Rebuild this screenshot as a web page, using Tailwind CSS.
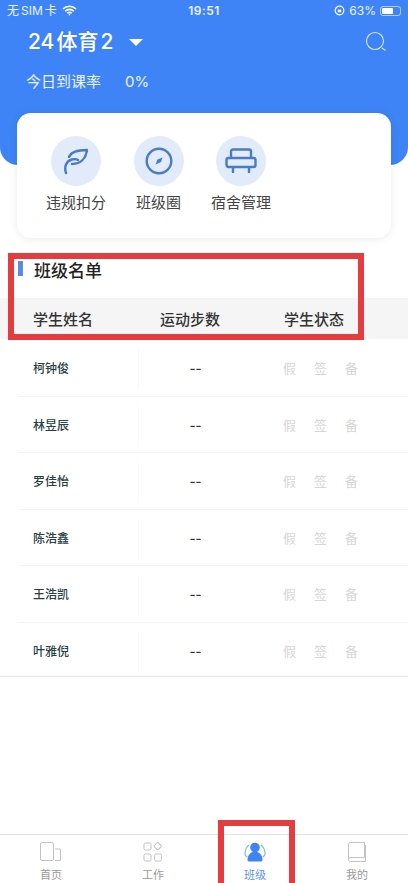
<!DOCTYPE html>
<html lang="zh-CN">
<head>
  <meta charset="UTF-8" />
  <title>班级</title>
  <script src="https://cdn.jsdelivr.net/npm/@tailwindcss/browser@4"></script>
</head>
<body class="bg-white font-['Inter','Noto_Sans_CJK_SC',sans-serif]">
  <div class="relative w-[408px] h-[883px] overflow-hidden flex flex-col bg-white">

    <!-- blue header -->
    <header class="h-[165px] shrink-0 bg-[#3e84f6] rounded-b-[18px] text-white px-[7px]">
      <div class="h-[21px] grid grid-cols-3 items-center text-[12px] text-white/90">
        <div class="flex items-center gap-[5px] whitespace-nowrap">
          <span>无<span class="mx-[2px]">SIM</span>卡</span>
          <svg width="15" height="11" viewBox="0 0 15 11" fill="none" stroke="white" stroke-width="1.6">
            <path d="M1 4a9 9 0 0 1 13 0M3.200 6.200a6 6 0 0 1 8.600 0M5.300 8.300a3 3 0 0 1 4.400 0" />
            <circle cx="7.500" cy="9.800" r=".8" fill="white" stroke="none" />
          </svg>
        </div>
        <span class="font-semibold text-center tracking-[0.5px]">19:51</span>
        <div class="flex items-center justify-end gap-[4px]">
          <svg width="11" height="11" viewBox="0 0 11 11" fill="none" stroke="white" stroke-width="1.2">
            <circle cx="5.500" cy="5.500" r="4.300" />
            <rect x="3.800" y="4.600" width="3.400" height="2.600" fill="white" stroke="none" />
          </svg>
          <span>63%</span>
          <div class="w-[21px] h-[10px] rounded-[3px] border border-white/60 p-[1px] flex">
            <div class="w-[62%] bg-white rounded-[1px]"></div>
          </div>
        </div>
      </div>

      <div class="mt-[7px] pl-[21px] pr-[14px] flex items-center justify-between">
        <div class="flex items-center">
          <span class="text-[21px] leading-[28px] font-medium">24<span class="mx-[2px]">体育</span>2</span>
          <span class="ml-[16px] mt-[1px] w-0 h-0 border-x-[7px] border-x-transparent border-t-[7px] border-t-white"></span>
        </div>
        <svg width="22" height="22" viewBox="0 0 22 22" fill="none" stroke="white" stroke-width="1.1" class="opacity-80">
          <circle cx="10" cy="10" r="8.500" />
          <path d="M17 17l3.500 2.500" />
        </svg>
      </div>

      <div class="mt-[16px] pl-[19px] flex items-center text-[15px] leading-[20px] text-white/90">
        <span>今日到课率</span>
        <span class="ml-[24px]">0%</span>
      </div>
    </header>

    <!-- shortcuts card -->
    <section class="relative -mt-[52px] mx-[17px] h-[125px] shrink-0 rounded-[14px] bg-white shadow-[0_1px_8px_rgba(0,0,0,0.08)] flex pt-[23px] pl-[34px] gap-[32.500px]">
      <div class="w-[50px] flex flex-col items-center">
        <div class="w-[50px] h-[50px] rounded-full bg-[#e1ebf9] flex items-center justify-center">
          <svg width="24" height="28" viewBox="0 0 24 28" fill="none" stroke="#4a7cc4" stroke-width="2.400" stroke-linecap="round" stroke-linejoin="round">
            <path d="M5 10C7 5 14 3 23 3C22 11 17 17 8 17" />
            <path d="M2 26C0 20 2 14 8 12.500C10 12 12.500 12 14 13" />
          </svg>
        </div>
        <span class="mt-[7px] text-[15px] leading-[20px] text-[#444] whitespace-nowrap">违规扣分</span>
      </div>
      <div class="w-[50px] flex flex-col items-center">
        <div class="w-[50px] h-[50px] rounded-full bg-[#e1ebf9] flex items-center justify-center">
          <svg width="28" height="28" viewBox="0 0 28 28" fill="none">
            <circle cx="14" cy="14" r="12.300" stroke="#4a7cc4" stroke-width="2.400" />
            <path d="M17.500 10.500l-1.500 4.500-5.500 2.500 2-5z" fill="#4a7cc4" />
          </svg>
        </div>
        <span class="mt-[7px] text-[15px] leading-[20px] text-[#444] whitespace-nowrap">班级圈</span>
      </div>
      <div class="w-[50px] flex flex-col items-center">
        <div class="w-[50px] h-[50px] rounded-full bg-[#e1ebf9] flex items-center justify-center">
          <svg width="32" height="26" viewBox="0 0 32 26" fill="none" stroke="#4a7cc4" stroke-width="2.400" stroke-linejoin="round">
            <path d="M6 10V3.500a2 2 0 0 1 2-2h16a2 2 0 0 1 2 2V10" />
            <rect x="1.500" y="10" width="29" height="9" rx="2" />
            <path d="M8 19v6M24 19v6" />
          </svg>
        </div>
        <span class="mt-[7px] text-[15px] leading-[20px] text-[#444] whitespace-nowrap">宿舍管理</span>
      </div>
    </section>

    <!-- roster -->
    <section class="mt-[22px] flex-1">
      <div class="h-[38px] flex pl-[18px]">
        <span class="w-[5px] h-[15px] mt-[1px] bg-[#5b8bdc]"></span>
        <h2 class="ml-[11px] text-[17px] leading-[20px] pt-[1px] font-medium text-[#222]">班级名单</h2>
      </div>
      <div class="h-[41px] bg-[#f5f5f5] flex items-end pb-[9px] text-[15px] leading-[20px] text-[#333] font-medium">
        <span class="w-[160px] pl-[33px]">学生姓名</span>
        <span class="w-[124px]">运动步数</span>
        <span>学生状态</span>
      </div>
      <div class="pt-[1px]">
        <div class="h-[56.500px] ml-[18px] border-b border-[#f4f4f4] flex items-start">
          <span class="mt-[9px] w-[121px] h-[40px] pl-[15px] border-r border-[#f8f8f8] flex items-center text-[12px] font-medium text-[#274046]">柯钟俊</span>
          <span class="mt-[8px] leading-[40px] w-[113px] text-center text-[13px] font-medium text-[#333]">--</span>
          <div class="mt-[8px] leading-[40px] ml-[31px] flex gap-[18px] text-[13px] text-[#d6d6d6]"><span>假</span><span>签</span><span>备</span></div>
        </div>
        <div class="h-[56.500px] ml-[18px] border-b border-[#f4f4f4] flex items-start">
          <span class="mt-[9px] w-[121px] h-[40px] pl-[15px] border-r border-[#f8f8f8] flex items-center text-[12px] font-medium text-[#274046]">林昱辰</span>
          <span class="mt-[8px] leading-[40px] w-[113px] text-center text-[13px] font-medium text-[#333]">--</span>
          <div class="mt-[8px] leading-[40px] ml-[31px] flex gap-[18px] text-[13px] text-[#d6d6d6]"><span>假</span><span>签</span><span>备</span></div>
        </div>
        <div class="h-[56.500px] ml-[18px] border-b border-[#f4f4f4] flex items-start">
          <span class="mt-[9px] w-[121px] h-[40px] pl-[15px] border-r border-[#f8f8f8] flex items-center text-[12px] font-medium text-[#274046]">罗佳怡</span>
          <span class="mt-[8px] leading-[40px] w-[113px] text-center text-[13px] font-medium text-[#333]">--</span>
          <div class="mt-[8px] leading-[40px] ml-[31px] flex gap-[18px] text-[13px] text-[#d6d6d6]"><span>假</span><span>签</span><span>备</span></div>
        </div>
        <div class="h-[56.500px] ml-[18px] border-b border-[#f4f4f4] flex items-start">
          <span class="mt-[9px] w-[121px] h-[40px] pl-[15px] border-r border-[#f8f8f8] flex items-center text-[12px] font-medium text-[#274046]">陈浩鑫</span>
          <span class="mt-[8px] leading-[40px] w-[113px] text-center text-[13px] font-medium text-[#333]">--</span>
          <div class="mt-[8px] leading-[40px] ml-[31px] flex gap-[18px] text-[13px] text-[#d6d6d6]"><span>假</span><span>签</span><span>备</span></div>
        </div>
        <div class="h-[56.500px] ml-[18px] border-b border-[#f4f4f4] flex items-start">
          <span class="mt-[9px] w-[121px] h-[40px] pl-[15px] border-r border-[#f8f8f8] flex items-center text-[12px] font-medium text-[#274046]">王浩凯</span>
          <span class="mt-[8px] leading-[40px] w-[113px] text-center text-[13px] font-medium text-[#333]">--</span>
          <div class="mt-[8px] leading-[40px] ml-[31px] flex gap-[18px] text-[13px] text-[#d6d6d6]"><span>假</span><span>签</span><span>备</span></div>
        </div>
        <div class="h-[54.500px] border-b border-[#e6e6e6] flex items-start pl-[18px]">
          <span class="mt-[9px] w-[121px] h-[40px] pl-[15px] border-r border-[#f8f8f8] flex items-center text-[12px] font-medium text-[#274046]">叶雅倪</span>
          <span class="mt-[8px] leading-[40px] w-[113px] text-center text-[13px] font-medium text-[#333]">--</span>
          <div class="mt-[8px] leading-[40px] ml-[31px] flex gap-[18px] text-[13px] text-[#d6d6d6]"><span>假</span><span>签</span><span>备</span></div>
        </div>
      </div>
    </section>

    <!-- tab bar -->
    <nav class="h-[49px] shrink-0 border-t border-[#e2e2e2] grid grid-cols-4 text-[11px] leading-[14px] text-[#999]">
      <div class="flex flex-col items-center pt-[7px]">
        <svg width="22" height="20" viewBox="0 0 22 20" fill="none" stroke="#c2c2c2" stroke-width="1">
          <rect x=".5" y=".5" width="13" height="18" rx="1.500" />
          <path d="M15 7h5.500v11.500H15" />
        </svg>
        <span class="mt-[6px]">首页</span>
      </div>
      <div class="flex flex-col items-center pt-[7px]">
        <svg width="20" height="20" viewBox="0 0 20 20" fill="none" stroke="#c2c2c2" stroke-width="1">
          <rect x="1" y="1" width="7" height="7" rx="1.500" />
          <rect x="11.800" y="1.200" width="5.800" height="5.800" rx="1.500" transform="rotate(45 14.700 4.100)" />
          <rect x="1" y="12" width="7" height="7" rx="1.500" />
          <rect x="11.500" y="12" width="7" height="7" rx="1.500" />
        </svg>
        <span class="mt-[6px]">工作</span>
      </div>
      <div class="flex flex-col items-center pt-[7px] text-[#5b95e8]">
        <svg width="22" height="20" viewBox="0 0 22 20" fill="none">
          <path d="M5 3C2.500 5 1 9 1 11.500c0 2 1 3 2.500 3.500M17 3c2.500 2 4 6 4 8.500 0 2-1 3-2.500 3.500" stroke="#8db6f2" stroke-width="1.200" />
          <circle cx="11" cy="5.500" r="4.800" fill="#3e84f6" />
          <path d="M3.500 18c0-5 3.500-8.500 7.500-8.500s7.500 3.500 7.500 8.500c0 1-1 1.500-2 1.500H5.500c-1 0-2-.5-2-1.500z" fill="#3e84f6" />
        </svg>
        <span class="mt-[6px]">班级</span>
      </div>
      <div class="flex flex-col items-center pt-[7px]">
        <svg width="20" height="20" viewBox="0 0 20 20" fill="none" stroke="#c2c2c2" stroke-width="1">
          <path d="M3.500.5h14v15h-14a2 2 0 0 0-2 2V2.500a2 2 0 0 1 2-2z" />
          <path d="M1.500 17.500a2 2 0 0 0 2 2h15V3" />
        </svg>
        <span class="mt-[6px]">我的</span>
      </div>
    </nav>

    <!-- red annotation boxes -->
    <div class="absolute left-[8px] top-[253px] w-[356px] h-[87px] border-[6px] border-[#e43d40]"></div>
    <div class="absolute left-[218px] top-[820px] w-[77px] h-[63px] border-[6px] border-b-0 border-[#e43d40]"></div>
  </div>
</body>
</html>
